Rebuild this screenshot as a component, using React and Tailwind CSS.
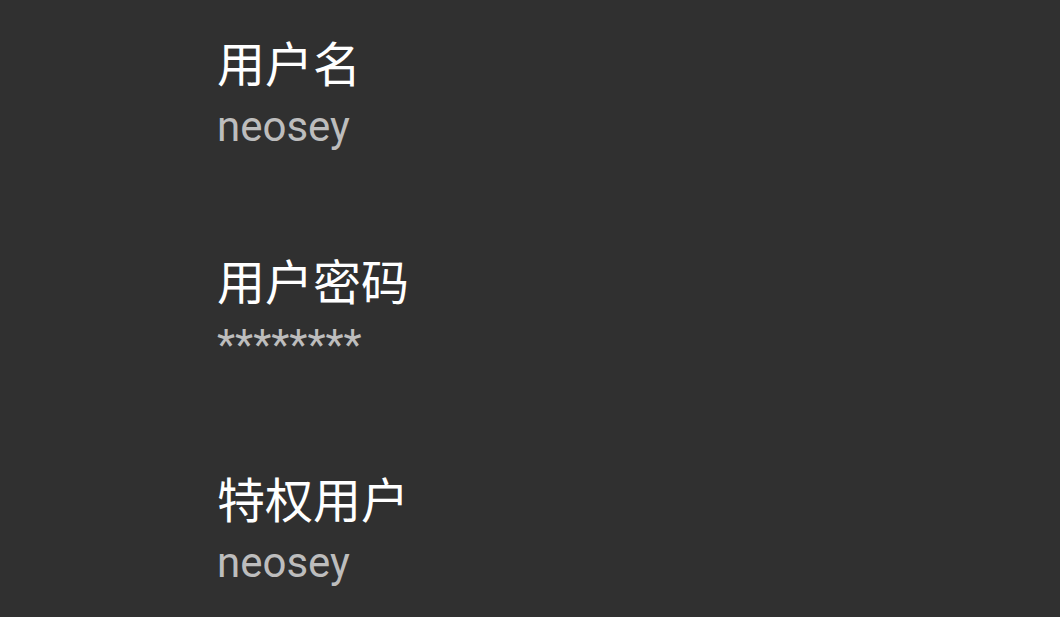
import React from 'react';

const items = [
  { title: '用户名', value: 'neosey' },
  { title: '用户密码', value: '********' },
  { title: '特权用户', value: 'neosey' },
];

const App = () => {
  return (
    <div className="w-[1060px] h-[617px] overflow-hidden bg-[#303030] font-['Roboto','Noto_Sans_CJK_SC',sans-serif]">
      <div className="flex flex-col pl-[217px] pt-[36px]">
        {items.map((item, index) => (
          <div key={index} className="flex flex-col h-[218px]">
            <p className="text-[48px] leading-[60px] text-white">{item.title}</p>
            <p className="mt-[7px] text-[42px] leading-[48px] text-[#bdbdbd]">{item.value}</p>
          </div>
        ))}
      </div>
    </div>
  );
};

export default App;
